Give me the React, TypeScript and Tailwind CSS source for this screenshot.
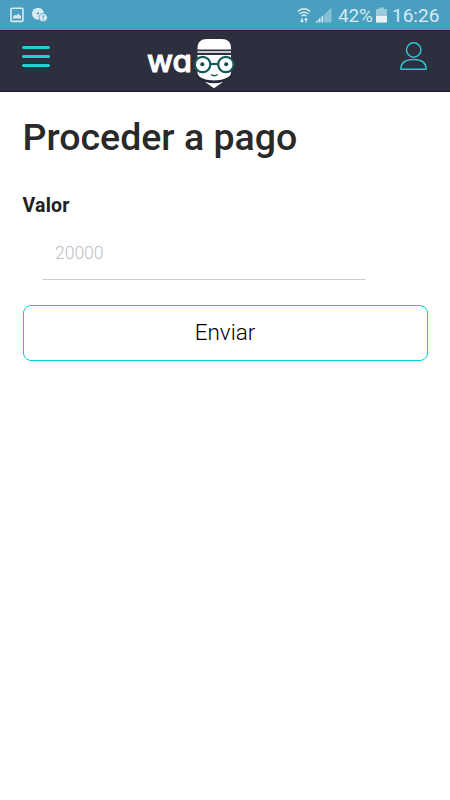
function StatusBar() {
  return (
    <div className="flex h-[30px] items-center justify-between bg-[#4a9ebf] pr-[11px] pl-[10px] text-[#d7ebf2]">
      <div className="flex items-center gap-[8px]">
        <svg width="14" height="16" viewBox="0 0 14 16" fill="none">
          <rect x="1" y="1.2" width="12" height="13.2" rx="1" stroke="currentColor" strokeWidth="1.6" />
          <path d="M3 11.5V10l1.8-2.2 1.4 1 2-2.4L11 9.2v2.3z" fill="currentColor" />
        </svg>
        <svg width="16" height="16" viewBox="0 0 16 16">
          <circle cx="6" cy="6.8" r="6" fill="currentColor" />
          <circle cx="6" cy="6.4" r="1.1" fill="#4a9ebf" />
          <circle cx="11.2" cy="10.6" r="4.2" fill="currentColor" stroke="#4a9ebf" strokeWidth=".8" />
          <path d="M11.2 8.2v2.9M11.2 12v1.2" stroke="#4a9ebf" strokeWidth="1.2" />
        </svg>
      </div>
      <div className="flex items-center">
        <svg width="14" height="17" viewBox="0 0 14 17" fill="none" stroke="currentColor" strokeWidth="1.5">
          <path d="M.7 4.6C4.2.9 9.8.9 13.3 4.6M2.8 7C5 4.7 9 4.7 11.2 7M4.800 9.100c1.200-1.200 3.200-1.200 4.400 0" />
          <path d="M5 11v4M3.500 13.500 5 15l1.500-1.500M9 15.500v-4M7.500 13 9 11.500l1.500 1.500" strokeWidth="1.2" />
        </svg>
        <svg className="ml-[5px]" width="16" height="16" viewBox="0 0 16 16">
          <path d="M8 8 15.5.5v15H8z" fill="#86bfd3" />
          <path d="M0 15.5v-1.2l1.5-1.3v2.5zM2.5 15.5v-3.3L4.5 10.5v5zM5.5 15.5V9.8L7.200 8.200v7.300z" fill="currentColor" />
        </svg>
        <span className="ml-[6px] w-[36px] text-[19px] leading-none whitespace-nowrap tracking-[-0.2px]">42%</span>
        <svg className="ml-[2px]" width="11" height="16" viewBox="0 0 11 16">
          <path d="M0 2h3V.5h5V2h3v13.5H0z" fill="#9acadb" />
          <path d="M0 9h11v6.5H0z" fill="#e6f3f7" />
        </svg>
        <span className="ml-[5px] w-[47px] text-[19px] leading-none whitespace-nowrap">16:26</span>
      </div>
    </div>
  );
}

function Logo() {
  return (
    <svg width="92" height="52" viewBox="145 37 92 52" role="img" aria-label="wa">
      <text
        x="147"
        y="71.9"
        textLength="45"
        lengthAdjust="spacingAndGlyphs"
        className="fill-white stroke-white [font-family:Inter,sans-serif] text-[31px] font-medium [font-feature-settings:'cv11'_1]"
        strokeWidth="1"
        strokeLinejoin="round"
      >
        wa
      </text>
      <path d="M197.5 49.5V48c0-6 4-9 9-9H222c5 0 9 3 9 9v1.5z" fill="white" />
      <path d="M197.5 51.2H231v1.5h-33.5zM197.5 55H231v18q-1 4-5 6-5 2-12 2t-11.5-2q-4-2-5-6z" fill="white" />
      <path d="M205 82q9 2.500 18 0l-9 6.200z" fill="white" />
      <path d="M197 76.500q8 5 17 5t17-5" fill="none" stroke="#222638" strokeWidth="1.800" />
      <g fill="white" stroke="#14585c" strokeWidth="2.2">
        <circle cx="202.600" cy="64.500" r="7.700" />
        <circle cx="225.900" cy="64.500" r="7.700" />
        <path d="M210.500 64h7.500" />
      </g>
      <circle cx="202.300" cy="64.300" r="2" fill="#15474f" />
      <circle cx="226.200" cy="64.300" r="2" fill="#15474f" />
      <path d="M211 74.500q3.300 2.500 6.600 0" fill="none" stroke="#14585c" strokeWidth="1.300" />
    </svg>
  );
}

function Header() {
  return (
    <header className="flex h-[62px] items-start border-t border-b border-t-[#3a1e31] border-b-[#15162a] bg-[#2e2f3e] pr-[23px] pl-[22px]">
      <button aria-label="Menu" className="mt-[15px] flex w-[28px] flex-col gap-[6px]">
        <span className="h-[3px] rounded-full bg-[#24cfd6]" />
        <span className="h-[3px] rounded-full bg-[#24cfd6]" />
        <span className="h-[3px] rounded-full bg-[#24cfd6]" />
      </button>
      <div className="mt-[6px] ml-[95px]"><Logo /></div>
      <svg className="mt-[11px] ml-auto" width="27" height="29" viewBox="0 0 27 29" fill="none" stroke="#2bc7d1" strokeWidth="1.5">
        <circle cx="13.7" cy="8" r="7.2" />
        <path d="M.9 27.2C1 21 5.5 17.500 13.500 17.500S26 21 26.100 27.200z" strokeLinejoin="round" />
      </svg>
    </header>
  );
}

export default function App() {
  return (
    <div className="flex h-[800px] w-[450px] flex-col bg-white [font-family:Roboto,sans-serif]">
      <StatusBar />
      <Header />
      <main className="flex flex-col pt-[23px] pr-[22px] pl-[22px]">
        <h1 className="pl-[0.5px] text-[37.5px] leading-[45px] font-medium text-[#292929]">Proceder a pago</h1>
        <label htmlFor="valor" className="mt-[34px] pl-[0.5px] text-[19.5px] leading-[24px] font-bold tracking-[0.2px] text-[#202020]">Valor</label>
        <input
          id="valor"
          placeholder="20000"
          className="mt-[8px] ml-[20px] h-[54px] w-[324px] border-b border-[#c9cdd0] px-[13px] text-[17.5px] font-light outline-none placeholder:text-[#b9c0c5]"
        />
        <button className="mt-[25px] ml-[0.5px] h-[56px] w-[405px] rounded-[8px] border border-[#08cdd7] text-[22.5px] font-light text-black">Enviar</button>
      </main>
    </div>
  );
}
